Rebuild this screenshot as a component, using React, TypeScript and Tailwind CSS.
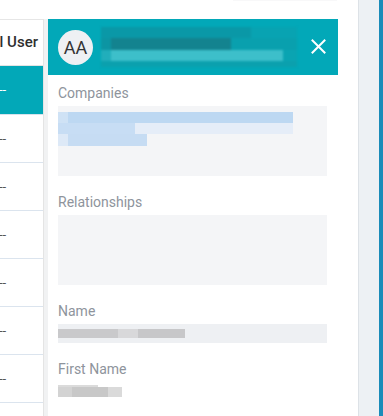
import React from 'react';

const rows = [0, 1, 2, 3, 4, 5, 6];

const Label: React.FC<{ text: string; className?: string }> = ({ text, className }) => (
  <div className={`text-[14px] leading-[16px] text-[#8e949c] ${className ?? ''}`}>{text}</div>
);

const App: React.FC = () => {
  return (
    <div
      className="w-[383px] h-[416px] bg-white flex overflow-hidden"
      style={{ fontFamily: 'Roboto, "Liberation Sans", sans-serif' }}
    >
      <div className="flex-1 flex flex-col min-h-0">
        <div className="h-[19px] shrink-0 flex">
          <div className="ml-[233px] w-[104px] h-px bg-[#f8f8f9]" />
        </div>
        <div className="flex flex-1 min-h-0 overflow-hidden">
          {/* user table, scrolled to the right */}
          <div className="w-[43px] shrink-0 bg-white border-t border-[#e6e6e6] overflow-hidden flex flex-col">
            <div className="h-[46px] shrink-0 flex items-center justify-end pr-[5px] border-b border-[#e3e3e3] text-[15px] font-medium text-[#2f2f2f] whitespace-nowrap">
              Internal User
            </div>
            <div className="h-[49px] shrink-0 bg-[#02a8b8] border-b border-[#d6e2ec] flex items-center text-[13px] text-white">
              <span className="-ml-[1px]">--</span>
            </div>
            {rows.map((r) => (
              <div
                key={r}
                className="h-[48px] shrink-0 border-b border-[#dbe4ee] flex items-center text-[13px] text-[#555]"
              >
                <span className="-ml-[1px]">--</span>
              </div>
            ))}
          </div>
          <div className="w-[5px] shrink-0 bg-[#f1f2f3] border-l border-[#e4e4e4]" />

          {/* detail panel */}
          <div className="w-[290px] shrink-0 flex flex-col bg-white">
            <div className="h-[56px] shrink-0 bg-[#02a8b8] flex items-center pl-[10px] pr-[12px]">
              <div className="w-[35px] h-[35px] rounded-full bg-[#eef0f3] flex items-center justify-center text-[18px] text-[#333]">
                AA
              </div>
              <div className="ml-[8px] flex flex-col w-[196px] blur-[1px]">
                <div className="h-[11px] flex">
                  <div className="w-[150px] bg-[#0a98a7]" />
                  <div className="w-[46px] bg-[#08a3b2]" />
                </div>
                <div className="h-[12px] flex">
                  <div className="w-[10px] bg-[#0c95a3]" />
                  <div className="w-[120px] bg-[#13838f]" />
                  <div className="w-[66px] bg-[#09a0ae]" />
                </div>
                <div className="h-[11px] flex">
                  <div className="w-[10px] bg-[#21aebb]" />
                  <div className="w-[172px] bg-[#3dbfca]" />
                  <div className="w-[14px] bg-[#0aa4b2]" />
                </div>
                <div className="h-[6px] bg-[#0ba0ae]" />
              </div>
              <div className="flex-1" />
              <svg width="15" height="15" viewBox="0 0 15 15" className="mb-[2px]">
                <path d="M1.5 1.5 L13.5 13.5 M13.5 1.5 L1.5 13.5" stroke="#fff" strokeWidth="2" strokeLinecap="square" />
              </svg>
            </div>

            <div className="flex flex-col pl-[10px] pr-[11px] pt-[10px]">
              <Label text="Companies" />
              <div className="mt-[5px] h-[70px] bg-[#f4f5f7] pt-[6px] flex flex-col">
                <div className="h-[11px] w-[235px] flex">
                  <div className="w-[10px] bg-[#cfe2f5]" />
                  <div className="flex-1 bg-[#bdd8f2]" />
                </div>
                <div className="h-[11px] w-[235px] flex">
                  <div className="w-[77px] bg-[#c7ddf4]" />
                  <div className="flex-1 bg-[#e5edf8]" />
                </div>
                <div className="h-[12px] w-[89px] flex">
                  <div className="w-[10px] bg-[#dde9f7]" />
                  <div className="flex-1 bg-[#c6dcf3]" />
                </div>
              </div>

              <Label text="Relationships" className="mt-[18px]" />
              <div className="mt-[5px] h-[70px] bg-[#f4f5f7]" />

              <Label text="Name" className="mt-[18px]" />
              <div className="mt-[5px] h-[19px] bg-[#eef0f3] flex items-center">
                <div className="h-[9px] w-[127px] flex">
                  <div className="w-[60px] bg-[#c9c9cb]" />
                  <div className="w-[20px] bg-[#d8d8da]" />
                  <div className="w-[47px] bg-[#c7c7c9]" />
                </div>
              </div>

              <Label text="First Name" className="mt-[18px]" />
              <div className="mt-[8px] flex flex-col">
                <div className="h-[2px] w-[40px] bg-[#b8b8b8] opacity-50" />
                <div className="h-[10px] w-[64px] flex">
                  <div className="w-[14px] bg-[#d3d3d3]" />
                  <div className="w-[36px] bg-[#c8c8c8]" />
                  <div className="w-[14px] bg-[#dadada]" />
                </div>
              </div>
            </div>
          </div>
        </div>
      </div>
      <div className="w-[21px] shrink-0 bg-[#edf1f4] border-l border-[#dde2e7]" />
      <div className="w-[4px] shrink-0 bg-[#1a8cb9]" />
    </div>
  );
};

export default App;
